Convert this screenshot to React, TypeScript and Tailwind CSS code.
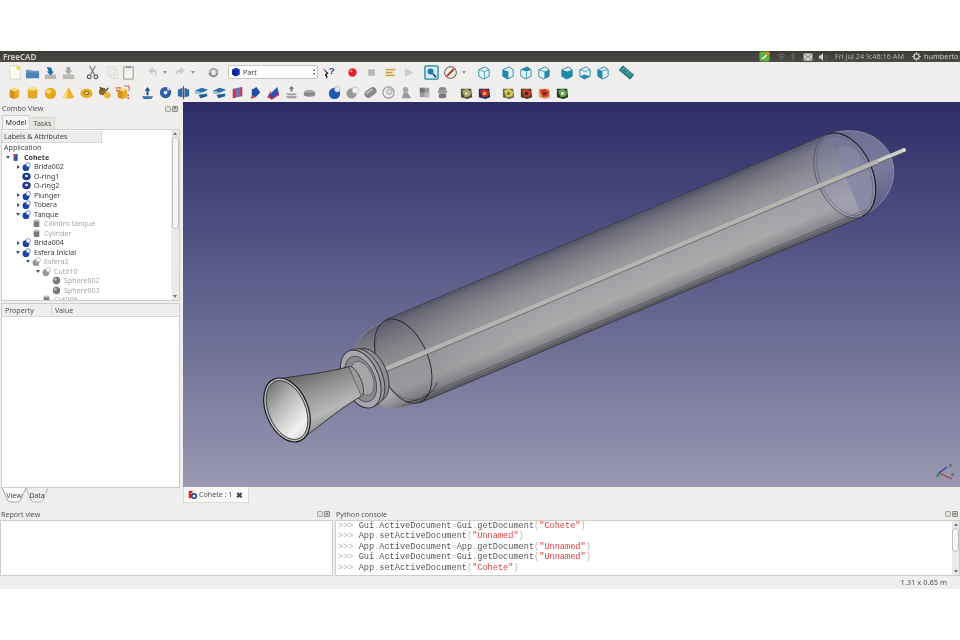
import type { ReactNode } from "react";

type ToolProps = { className?: string; children?: ReactNode };

function Tool({ className = "", children }: ToolProps) {
  return (
    <div className={`flex h-[20px] w-[18px] shrink-0 items-center justify-center ${className}`}>
      <svg viewBox="0 0 16 16" className="h-[15px] w-[15px]">
        {children}
      </svg>
    </div>
  );
}

function Arrow({ className = "" }: { className?: string }) {
  return (
    <div className={`flex h-[20px] w-[8px] shrink-0 items-center justify-center ${className}`}>
      <div className="h-0 w-0 border-x-[2px] border-t-[3px] border-x-transparent border-t-[#9a9a9a]" />
    </div>
  );
}

// part primitives, row 2
const box = (
  <>
    <path d="M3 5l5-2 5 2v8l-5 2-5-2z" fill="#e8ad2c" />
    <path d="M3 5l5 2 5-2-5-2z" fill="#f6dc86" />
    <path d="M8 7v8l-5-2V5z" fill="#d0901c" />
  </>
);
const cyl = (
  <>
    <path d="M3 4v9c0 2 10 2 10 0V4z" fill="#e2a526" />
    <ellipse cx="8" cy="4" rx="5" ry="2" fill="#f7dd85" />
  </>
);
const sphere = (
  <>
    <circle cx="8" cy="9" r="6" fill="#e8a818" />
    <circle cx="6" cy="7" r="2.5" fill="#f8dc80" />
  </>
);
const cone = (
  <>
    <path d="M8 2l6 11c-2 2-10 2-12 0z" fill="#eeb428" />
    <path d="M8 2L2 13c1 1 3 1 4 1z" fill="#f7dc80" />
  </>
);
const torus = (
  <>
    <ellipse cx="8" cy="9" rx="6.5" ry="5" fill="#e8ad2c" />
    <ellipse cx="8" cy="8.5" rx="3" ry="2" fill="#8f6a18" />
    <ellipse cx="8" cy="8.5" rx="2" ry="1" fill="#f4e4b0" />
  </>
);
const blueTool = (
  <>
    <path d="M2 12h12l-2 3H4z" fill="#3b6ea8" />
    <path d="M8 2l3 4H9v5H7V6H5z" fill="#17508c" />
  </>
);
const blueDisc = (
  <>
    <circle cx="8" cy="8" r="6" fill="#2a5ea8" />
    <circle cx="8" cy="8" r="2" fill="#e8edf2" />
    <path d="M10 2l3 3-3 1z" fill="#e8edf2" />
  </>
);
const mirror = (
  <>
    <path d="M2 5l5-2v10l-5-1z" fill="#2f6ba8" />
    <path d="M14 5L9 3v10l5-1z" fill="#2f6ba8" />
    <path d="M8 1v14" stroke="#d02020" strokeWidth="1.2" />
  </>
);
const fillet = (
  <>
    <path d="M1 6l7-3 7 2-6 3z" fill="#2f6ba8" />
    <path d="M1 6l8 2v3l-8-2z" fill="#9ac0d8" />
    <path d="M5 11l9-2v3l-7 2z" fill="#1c5a90" />
  </>
);
const redFace = (
  <>
    <path d="M3 4l10-2v10L3 14z" fill="#7a70b8" />
    <path d="M3 4l3 1v8l-3 1z" fill="#d83040" />
    <path d="M13 2l-2 1v8l2 1z" fill="#d83040" />
  </>
);
const blueRed = (
  <>
    <path d="M4 5l5-3 4 6-5 5-4-2z" fill="#1c4fa8" />
    <path d="M4 11l4 2-5 2z" fill="#d83040" />
  </>
);
const loft = (
  <>
    <path d="M2 12L12 2l2 8-8 5z" fill="#2a50b0" />
    <path d="M2 12l4 3 8-5" fill="none" stroke="#d83040" strokeWidth="1.4" />
    <path d="M2 14l3-7" stroke="#d83040" strokeWidth="1.2" />
  </>
);
const thick = (
  <>
    <path d="M8 1l3 3H9v3H7V4H5z" fill="#777" />
    <path d="M2 9h12l-2 2H4zM2 12h12l-2 2H4z" fill="#999" />
  </>
);
const cross = (
  <>
    <ellipse cx="8" cy="8" rx="6" ry="3" fill="#aaa" />
    <path d="M2 8v3c0 2 12 2 12 0V8" fill="#8a8a8a" />
  </>
);
const ballBlue = (
  <>
    <circle cx="8" cy="9" r="6" fill="#1f55b8" />
    <circle cx="11" cy="4.5" r="3" fill="#e6e9f2" stroke="#888" strokeWidth=".5" />
  </>
);
const ballGray = (shade: string) => (
  <>
    <circle cx="7" cy="9" r="5.5" fill={shade} />
    <circle cx="11" cy="5.5" r="3.5" fill="#f1f1f1" stroke="#999" strokeWidth=".5" />
  </>
);
const pill = (
  <g transform="rotate(-35 8 8)">
    <rect x="1" y="4" width="14" height="8" rx="4" fill="#888" />
    <rect x="3" y="5" width="9" height="2.5" rx="1.2" fill="#b5b5b5" />
  </g>
);
const ringGray = (
  <>
    <circle cx="8" cy="8" r="6" fill="none" stroke="#999" strokeWidth="1.2" />
    <circle cx="9" cy="7" r="3" fill="#ddd" stroke="#777" strokeWidth=".6" />
  </>
);
const person = (
  <>
    <circle cx="7" cy="5" r="3" fill="#aaa" />
    <path d="M3 14l2-6h4l4 6z" fill="#999" />
  </>
);
const blocks = (
  <>
    <rect x="3" y="3" width="10" height="10" fill="#999" />
    <rect x="3" y="3" width="5" height="5" fill="#777" />
    <rect x="8" y="8" width="5" height="5" fill="#b8b8b8" />
  </>
);
const stack = (
  <>
    <ellipse cx="8" cy="4" rx="4" ry="2" fill="#888" />
    <rect x="3" y="5" width="10" height="4" rx="2" fill="#999" />
    <rect x="4" y="9" width="8" height="5" rx="2" fill="#777" />
  </>
);
const mesh = (accent: string, ground: string, spot: string) => (
  <>
    <path d="M2 4h11l1 9-5 2-7-2z" fill={ground} />
    <path d="M3 6l5-2 5 3-1 5-6 1z" fill={accent} />
    <circle cx="8" cy="9" r="1.800" fill={spot} />
  </>
);

// view cubes, row 1
const cube = (face: string, fill: string) => (
  <>
    <path d="M3 5l7-3 4 3v7l-6 3-5-3z" fill="#e4f2f5" stroke="#2b8aa6" strokeWidth="1" />
    <path d={face} fill={fill} />
  </>
);

function Row1() {
  return (
    <div className="flex h-[20px] items-center pl-[5px]">
      <Tool>
        <path d="M3 1h8l3 3v11H3z" fill="#fbfbf2" stroke="#c8c6b8" strokeWidth=".7" />
        <circle cx="12" cy="3" r="2" fill="#f2d23c" />
      </Tool>
      <Tool>
        <path d="M1 5h5l1 1h8v8H1z" fill="#6f9cc4" />
        <path d="M1 8h14v6H1z" fill="#4d82b4" />
      </Tool>
      <Tool>
        <path d="M2 10h12v5H2z" fill="#b9b9b4" />
        <path d="M4 2l5 1 1 4h2l-4 4-4-4h2z" fill="#1f6da8" />
      </Tool>
      <Tool>
        <path d="M2 10h12v5H2z" fill="#b9b9b4" />
        <path d="M6 2h4v4h2l-4 4-4-4h2z" fill="#a5a5a5" />
      </Tool>
      <Tool className="ml-[6px]">
        <path d="M5 1l5 9M11 1L6 10" stroke="#777" strokeWidth="1.2" />
        <circle cx="4.5" cy="12.5" r="2" fill="none" stroke="#555" strokeWidth="1.2" />
        <circle cx="11.5" cy="12.5" r="2" fill="none" stroke="#555" strokeWidth="1.2" />
      </Tool>
      <Tool className="ml-[2px]">
        <path d="M3 2h7v9H3zM6 5h7v9H6z" fill="#f1f1ee" stroke="#d2d2ce" strokeWidth=".8" />
      </Tool>
      <Tool className="-ml-[2px]">
        <path d="M3 2h10v13H3z" fill="#f4f4f1" stroke="#8f8f8a" strokeWidth="1" />
        <rect x="5.5" y="1" width="5" height="2.5" fill="#9a9a96" />
      </Tool>
      <Tool className="ml-[6px]">
        <path d="M4 6l4-4v2.5c4 0 5 3 4.500 6-1-2-2-3-4.500-3V10z" fill="#c9c9c6" />
        <path d="M10 12a3 3 0 0 0 2-2" stroke="#c0c0bc" fill="none" />
      </Tool>
      <Arrow />
      <Tool className="ml-[2px]">
        <path d="M12 6L8 2v2.500c-4 0-5 3-4.500 6 1-2 2-3 4.500-3V10z" fill="#c9c9c6" />
      </Tool>
      <Arrow />
      <Tool className="ml-[7px]">
        <path d="M3 8a5 5 0 0 1 9-3l1-1v4H9l1.500-1.500A3 3 0 0 0 5 8z" fill="#a9a9a6" />
        <path d="M13 8a5 5 0 0 1-9 3l-1 1V8h4l-1.500 1.500A3 3 0 0 0 11 8z" fill="#8f8f8c" />
      </Tool>
      <div className="ml-[6px] flex h-[14px] w-[90px] shrink-0 items-center rounded-[2px] border border-[#c8c6c2] bg-white pl-[2px]">
        <svg viewBox="0 0 16 16" className="h-[10px] w-[10px]">
          <path d="M2 4l6-3 6 3v8l-6 3-6-3z" fill="#1530b8" />
          <path d="M8 7v8l-6-3V4z" fill="#0c1f90" />
        </svg>
        <span className="ml-[2px] flex-1 text-[7.100px] text-[#444]">Part</span>
        <div className="mr-[2px] flex flex-col gap-[2px]">
          <div className="h-0 w-0 border-x-[1.5px] border-b-[2px] border-x-transparent border-b-[#333]" />
          <div className="h-0 w-0 border-x-[1.5px] border-t-[2px] border-x-transparent border-t-[#333]" />
        </div>
      </div>
      <Tool className="ml-[1px]">
        <path d="M2 3l4 6-2 1 2 4 1-1-1-3 2-1z" fill="#111" />
        <text x="8.500" y="10" fontSize="10" fontWeight="700" fill="#1a3f9c" fontFamily="Liberation Sans, sans-serif">?</text>
      </Tool>
      <Tool className="ml-[6px]">
        <circle cx="8" cy="8" r="4.500" fill="#e5202c" />
        <circle cx="6.500" cy="6.500" r="1.500" fill="#f88" />
      </Tool>
      <Tool className="ml-[1px]">
        <rect x="4.500" y="4.500" width="7" height="7" fill="#b9b9b6" />
      </Tool>
      <Tool className="ml-[1px]">
        <path d="M2 2h12v12H2z" fill="#efe9d8" />
        <path d="M3 5h10M3 8h7M3 11h9" stroke="#c49a3c" strokeWidth="1.400" />
      </Tool>
      <Tool>
        <path d="M4 3l9 5-9 5z" fill="#cfcfcc" />
      </Tool>
      <Tool className="ml-[5px]">
        <rect x="1" y="1" width="14" height="14" rx="1" fill="#d4eef2" stroke="#1f88a0" strokeWidth="1.400" />
        <circle cx="7" cy="7" r="3.200" fill="#2a78b0" />
        <path d="M9.500 9.500l3.500 3.500" stroke="#115a7a" strokeWidth="2" />
      </Tool>
      <Tool className="ml-[1px]">
        <circle cx="8" cy="8" r="6.200" fill="#f4f0e8" stroke="#444" strokeWidth="1" />
        <path d="M5 11l6-6" stroke="#3a9a4a" strokeWidth="2.400" />
        <path d="M3.500 12.500l9-9" stroke="#e0282c" strokeWidth="1.300" />
      </Tool>
      <Arrow className="ml-[1px]" />
      <Tool className="ml-[6px]">{cube("", "none")}<path d="M3 5l6 2 5-2M9 7v8" fill="none" stroke="#2b8aa6" strokeWidth=".8" /></Tool>
      <Tool className="ml-[6px]">{cube("M3 5l6 2v8l-6-3z", "#1f8aaa")}</Tool>
      <Tool>{cube("M3 5l7-3 4 3-5 2z", "#1f8aaa")}<path d="M9 7v8" stroke="#2b8aa6" strokeWidth=".8" /></Tool>
      <Tool>{cube("M9 7l5-2v7l-5 3z", "#1f8aaa")}<path d="M3 5l6 2" stroke="#2b8aa6" strokeWidth=".8" /></Tool>
      <Tool className="ml-[5px]">{cube("M9 7l5-2v7l-5 3zM3 5l6 2v8l-6-3z", "#1f8aaa")}</Tool>
      <Tool>{cube("M3 12l5 3 6-3-6-2z", "#1f8aaa")}<path d="M3 5l6 2 5-2" fill="none" stroke="#2b8aa6" strokeWidth=".8" /></Tool>
      <Tool>{cube("M3 5l5 1v9l-5-3z", "#1f8aaa")}<path d="M8 6l6-1" stroke="#2b8aa6" strokeWidth=".8" /></Tool>
      <Tool className="ml-[6px]">
        <g transform="rotate(40 8 8)">
          <rect x="0.500" y="5" width="15" height="6" fill="#2a8c8c" stroke="#0f5a5c" strokeWidth=".7" />
          <path d="M3 5v3M6 5v2M9 5v3M12 5v2" stroke="#b8e0e0" strokeWidth=".7" />
        </g>
      </Tool>
    </div>
  );
}

function Row2() {
  return (
    <div className="flex h-[20px] items-center pl-[5px]">
      <Tool>{box}</Tool>
      <Tool>{cyl}</Tool>
      <Tool>{sphere}</Tool>
      <Tool>{cone}</Tool>
      <Tool>{torus}</Tool>
      <Tool>
        <circle cx="6" cy="7" r="4" fill="#8a6a24" />
        <circle cx="11" cy="11" r="3.500" fill="#e8b840" />
        <path d="M3 2l3 3M12 3l-2 3" stroke="#333" strokeWidth="1.200" />
      </Tool>
      <Tool>
        {box}
        <path d="M2 7V3h5M10 1h5v5M14 10v5" fill="none" stroke="#d81818" strokeWidth="1.200" strokeDasharray="2 1" />
      </Tool>
      <Tool className="ml-[7px]">{blueTool}</Tool>
      <Tool>{blueDisc}</Tool>
      <Tool>{mirror}</Tool>
      <Tool>{fillet}</Tool>
      <Tool>{fillet}</Tool>
      <Tool>{redFace}</Tool>
      <Tool>{blueRed}</Tool>
      <Tool>{loft}</Tool>
      <Tool>{thick}</Tool>
      <Tool>{cross}</Tool>
      <Tool className="ml-[7px]">{ballBlue}</Tool>
      <Tool>{ballGray("#9a9a9a")}</Tool>
      <Tool>{pill}</Tool>
      <Tool>{ringGray}</Tool>
      <Tool>{person}</Tool>
      <Tool>{blocks}</Tool>
      <Tool>{stack}</Tool>
      <Tool className="ml-[6px]">{mesh("#a8a070", "#4a4a38", "#d8d090")}</Tool>
      <Tool>{mesh("#c83028", "#20285c", "#e8b050")}</Tool>
      <Tool className="ml-[6px]">{mesh("#d8c850", "#6a6a50", "#807848")}</Tool>
      <Tool>{mesh("#c84028", "#4a3a28", "#302820")}</Tool>
      <Tool>{mesh("#d03828", "#d8a070", "#5a3020")}</Tool>
      <Tool>{mesh("#6aa050", "#1f3a24", "#d8e0c0")}</Tool>
    </div>
  );
}

function DockButtons() {
  return (
    <div className="flex gap-[1px]">
      <div className="h-[6px] w-[6px] rounded-[1px] border border-[#aaa9a5] bg-[#e0e0dc]" />
      <div className="flex h-[6px] w-[6px] items-center justify-center rounded-[1px] border border-[#8a8a88] bg-[#cfcfcc] text-[5px] leading-none text-[#444]">×</div>
    </div>
  );
}

type TreeIcon = "doc" | "feature" | "ring" | "solid" | "ghost" | "ball";
type TreeRowData = { label: string; depth: number; icon: TreeIcon; open?: boolean; shut?: boolean; faded?: boolean; bold?: boolean };

const rows: TreeRowData[] = [
  { label: "Cohete", depth: 0, icon: "doc", open: true, bold: true },
  { label: "Brida002", depth: 1, icon: "feature", shut: true },
  { label: "O-ring1", depth: 1, icon: "ring" },
  { label: "O-ring2", depth: 1, icon: "ring" },
  { label: "Plunger", depth: 1, icon: "feature", shut: true },
  { label: "Tobera", depth: 1, icon: "feature", shut: true },
  { label: "Tanque", depth: 1, icon: "feature", open: true },
  { label: "Cilindro tanque", depth: 2, icon: "solid", faded: true },
  { label: "Cylinder", depth: 2, icon: "solid", faded: true },
  { label: "Brida004", depth: 1, icon: "feature", shut: true },
  { label: "Esfera Inicial", depth: 1, icon: "feature", open: true },
  { label: "Esfera2", depth: 2, icon: "ghost", open: true, faded: true },
  { label: "Cut010", depth: 3, icon: "ghost", open: true, faded: true },
  { label: "Sphere002", depth: 4, icon: "ball", faded: true },
  { label: "Sphere003", depth: 4, icon: "ball", faded: true },
  { label: "Cut009", depth: 3, icon: "solid", faded: true },
];

function RowIcon({ icon }: { icon: TreeIcon }) {
  return (
    <svg viewBox="0 0 16 16" className="h-[9px] w-[9px]">
      {icon === "doc" && (
        <>
          <path d="M3 2h7v12H3z" fill="#3048a8" />
          <path d="M3 2h4v5H3z" fill="#d83838" />
        </>
      )}
      {icon === "feature" && (
        <>
          <circle cx="7" cy="10" r="6" fill="#1c44a8" />
          <circle cx="11" cy="5" r="4" fill="#fff" stroke="#1c44a8" strokeWidth="1" />
        </>
      )}
      {icon === "ring" && (
        <>
          <ellipse cx="8" cy="8" rx="7.500" ry="6.500" fill="#1f3a88" />
          <ellipse cx="8" cy="7" rx="3" ry="2.200" fill="#d8dcf0" />
        </>
      )}
      {icon === "solid" && (
        <>
          <path d="M3 3v10c0 2 10 2 10 0V3z" fill="#7a7a7a" />
          <ellipse cx="8" cy="3" rx="5" ry="2" fill="#bbb" />
        </>
      )}
      {icon === "ghost" && (
        <>
          <circle cx="7" cy="10" r="6" fill="#999" />
          <circle cx="11" cy="5" r="4" fill="#fff" stroke="#999" strokeWidth="1" />
        </>
      )}
      {icon === "ball" && (
        <>
          <circle cx="8" cy="8" r="6.500" fill="#777" />
          <circle cx="6" cy="6" r="2.500" fill="#bbb" />
        </>
      )}
    </svg>
  );
}

function TreeRow({ row }: { row: TreeRowData }) {
  return (
    <div className="flex h-[9.5px] items-center leading-none" style={{ paddingLeft: 3 + row.depth * 10 }}>
      <div className="flex w-[6px] justify-center">
        {row.open && <div className="h-0 w-0 border-x-[2px] border-t-[3px] border-x-transparent border-t-[#2f5a78]" />}
        {row.shut && <div className="h-0 w-0 border-y-[2px] border-l-[3px] border-y-transparent border-l-[#2f5a78]" />}
      </div>
      <div className="ml-[1px] flex w-[9px] justify-center">
        <RowIcon icon={row.icon} />
      </div>
      <span className={`ml-[3px] whitespace-nowrap text-[7.100px] ${row.faded ? "text-[#a8a8a8]" : "text-[#3c3c3c]"} ${row.bold ? "font-bold" : ""}`}>
        {row.label}
      </span>
    </div>
  );
}

function ScrollBar({ className = "", thumb }: { className?: string; thumb: string }) {
  return (
    <div className={`flex shrink-0 flex-col items-center bg-[#eceae8] ${className}`}>
      <div className="mt-[2px] h-0 w-0 border-x-[2px] border-b-[3px] border-x-transparent border-b-[#777]" />
      <div className={`mt-[2px] w-[7px] rounded-[3px] border border-[#c4c2be] bg-[#f7f6f5] ${thumb}`} />
      <div className="flex-1" />
      <div className="mb-[2px] h-0 w-0 border-x-[2px] border-t-[3px] border-x-transparent border-t-[#777]" />
    </div>
  );
}

function BottomTab({ label, width, active }: { label: string; width: string; active?: boolean }) {
  return (
    <div className={`relative flex h-[15px] items-center justify-center pb-[1px] ${width}`}>
      <svg viewBox="0 0 24 15" preserveAspectRatio="none" className="absolute inset-0 h-full w-full">
        <path
          d="M1 0L6 12Q7 14 9 14H15Q17 14 18 12L23 0"
          fill={active ? "#fff" : "none"}
          stroke={active ? "#8f8e8a" : "#a8a7a3"}
          strokeWidth=".8"
          vectorEffect="non-scaling-stroke"
        />
      </svg>
      <span className="relative text-[7.100px] text-[#444]">{label}</span>
    </div>
  );
}

function LeftDock() {
  return (
    <div className="flex h-full w-[180px] shrink-0 flex-col pl-[1px]">
      <div className="flex h-[13px] shrink-0 items-center justify-between pl-[1px] pr-[2px] text-[7.100px] text-[#555]">
        <span>Combo View</span>
        <DockButtons />
      </div>
      <div className="flex h-[14px] shrink-0 items-end pl-[1px] text-[7.100px]">
        <div className="flex h-[14px] w-[28px] items-center justify-center rounded-t-[2px] border border-b-0 border-[#cfcdc9] bg-[#f6f5f4] text-[#333]">Model</div>
        <div className="ml-[1px] flex h-[12px] w-[24px] items-center justify-center border-t border-r border-[#d6d4d0] bg-[#e6e5e2] text-[#555]">Tasks</div>
      </div>
      <div className="flex h-[172px] shrink-0 border border-[#d0cec9] bg-white">
        <div className="min-w-0 flex-1 overflow-hidden">
          <div className="mt-[1px] flex h-[12px] w-[100px] items-center border-r border-b border-[#d8d6d2] bg-[#eeedeb] pl-[2px] text-[7.100px] text-[#444]">
            Labels &amp; Attributes
          </div>
          <div className="h-[9.500px] pl-[2px] text-[7.100px] leading-[9.500px] text-[#444]">Application</div>
          {rows.map((row) => (
            <TreeRow key={row.label} row={row} />
          ))}
        </div>
        <ScrollBar className="w-[8px]" thumb="h-[92px]" />
      </div>
      <div className="mt-[2px] flex h-[185px] shrink-0 flex-col border border-[#d0cec9] bg-white">
        <div className="flex h-[13px] shrink-0 items-center border-b border-[#d8d6d2] bg-[#efeeec] text-[7.100px] text-[#555]">
          <span className="w-[50px] border-r border-[#d8d6d2] pl-[3px]">Property</span>
          <span className="pl-[3px]">Value</span>
        </div>
      </div>
      <div className="flex h-[15px] shrink-0 items-start">
        <BottomTab label="View" width="w-[26px]" active />
        <BottomTab label="Data" width="w-[24px] -ml-[2px]" />
      </div>
    </div>
  );
}

function Rocket() {
  return (
    <svg viewBox="183 102 777 385" className="h-full w-full">
      <defs>
        <linearGradient id="bodyG" gradientUnits="userSpaceOnUse" x1="0" y1="-45" x2="0" y2="45">
          <stop offset="0" stopColor="#55556e" />
          <stop offset=".1" stopColor="#6f6f7c" />
          <stop offset=".3" stopColor="#8b8b91" />
          <stop offset=".55" stopColor="#a2a2a6" />
          <stop offset=".78" stopColor="#aaaaac" />
          <stop offset=".92" stopColor="#88888c" />
          <stop offset="1" stopColor="#505058" />
        </linearGradient>
        <linearGradient id="fadeG" gradientUnits="userSpaceOnUse" x1="126" y1="0" x2="640" y2="0">
          <stop offset="0" stopColor="#5a5a60" stopOpacity=".25" />
          <stop offset=".3" stopColor="#9a9aa0" stopOpacity="0" />
          <stop offset=".75" stopColor="#8686a8" stopOpacity="0" />
          <stop offset="1" stopColor="#8686a8" stopOpacity=".35" />
        </linearGradient>
        <linearGradient id="coneG" gradientUnits="userSpaceOnUse" x1="0" y1="-33" x2="0" y2="33">
          <stop offset="0" stopColor="#5e5e5e" />
          <stop offset=".35" stopColor="#8e8e8e" />
          <stop offset=".75" stopColor="#b8b8b8" />
          <stop offset="1" stopColor="#8c8c8c" />
        </linearGradient>
        <linearGradient id="mouthG" gradientUnits="userSpaceOnUse" x1="-14" y1="-30" x2="14" y2="30">
          <stop offset="0" stopColor="#6e6e6e" />
          <stop offset=".4" stopColor="#b8b8b8" />
          <stop offset=".8" stopColor="#f2f2f2" />
          <stop offset="1" stopColor="#d8d8d8" />
        </linearGradient>
        <linearGradient id="domeG" gradientUnits="userSpaceOnUse" x1="0" y1="-44" x2="0" y2="44">
          <stop offset="0" stopColor="#6c6c94" />
          <stop offset=".6" stopColor="#7a7a9c" />
          <stop offset="1" stopColor="#5e5e88" />
        </linearGradient>
        <linearGradient id="tailG" gradientUnits="userSpaceOnUse" x1="0" y1="-44" x2="0" y2="44">
          <stop offset="0" stopColor="#75758f" stopOpacity=".6" />
          <stop offset="1" stopColor="#acacc0" stopOpacity=".55" />
        </linearGradient>
      </defs>
      <g transform="translate(287 410) rotate(-22.800)">
        {/* tail dome */}
        <path d="M605-44A50 44 0 0 1 605 44Z" fill="url(#domeG)" stroke="#8c8cac" strokeWidth=".8" />
        <ellipse cx="612" cy="-14" rx="15" ry="15" fill="#8282a4" stroke="#5a5a70" strokeWidth=".6" />
        {/* front dome */}
        <path d="M126-44C92-44 80-32 76 0 80 32 92 44 126 44Z" fill="url(#bodyG)" stroke="#8a8a96" strokeWidth=".8" />
        {/* tank */}
        <rect x="126" y="-45" width="479" height="90" fill="url(#bodyG)" />
        <rect x="126" y="-45" width="479" height="90" fill="url(#fadeG)" />
        <ellipse cx="126" cy="0" rx="25" ry="44.500" fill="url(#bodyG)" />
        <ellipse cx="126" cy="0" rx="25" ry="44.500" fill="#55555c" fillOpacity=".18" />
        <ellipse cx="605" cy="0" rx="28" ry="44.500" fill="url(#tailG)" />
        <path d="M126-45H605M126 45H605" stroke="#3c3c48" strokeWidth=".9" />
        <path d="M126-42.500H600M130 42H612M130 39.500H612" stroke="#55555c" strokeWidth=".6" />
        <ellipse cx="126" cy="0" rx="25" ry="44.500" fill="none" stroke="#2a2a2e" strokeWidth=".9" />
        <path d="M126-40C110-40 102-20 100 0 102 20 110 40 126 40" fill="none" stroke="#55555c" strokeWidth=".5" />
        <path d="M112 38C124 44 142 42 149 33" fill="none" stroke="#2a2a2e" strokeWidth=".7" />
        <ellipse cx="605" cy="0" rx="28" ry="44.500" fill="none" stroke="#4a4a58" strokeWidth=".7" />
        <ellipse cx="605" cy="0" rx="25" ry="42" fill="none" stroke="#5a5a68" strokeWidth=".5" />
        <path d="M605-44.500A28 44.500 0 0 1 605 44.500" fill="none" stroke="#18181c" strokeWidth="1" />
      </g>
      {/* rod */}
      <path d="M383 370L878 161" stroke="#b4b4b0" strokeWidth="5" />
      <path d="M878 161L904 150" stroke="#cfcfca" strokeWidth="4" />
      <path d="M383 373L878 164" stroke="#5a5a60" strokeWidth=".7" />
      <path d="M878 163L904 152.500" stroke="#5a5a60" strokeWidth=".7" />
      <path d="M383 367.400L878 158.400" stroke="#7a7a80" strokeWidth=".4" />
      <circle cx="904" cy="150" r="2" fill="#dcdcd8" />
      <g transform="translate(287 410) rotate(-22.800)">
        {/* flange */}
        <ellipse cx="90" cy="0" rx="17" ry="28" fill="#8d8d93" stroke="#2c2c30" strokeWidth=".8" />
        <ellipse cx="85" cy="0" rx="17" ry="30" fill="#96969c" stroke="#2c2c30" strokeWidth=".8" />
        <ellipse cx="80" cy="0" rx="18" ry="30.500" fill="#a8a8ac" stroke="#2c2c30" strokeWidth=".9" />
        <ellipse cx="80" cy="0" rx="14" ry="24" fill="#8a8a8e" stroke="#3a3a3e" strokeWidth=".7" />
        <ellipse cx="82" cy="0" rx="10" ry="18" fill="#a5a5a8" stroke="#4a4a4e" strokeWidth=".6" />
        {/* nozzle */}
        <path d="M0-33C30-26 50-19 74-16V16C50 19 30 26 0 33Z" fill="url(#coneG)" stroke="#2c2c2c" strokeWidth=".8" />
        <path d="M74-16A6 16 0 0 1 74 16" fill="#9a9a9e" stroke="#2c2c2c" strokeWidth=".7" />
        <ellipse cx="0" cy="0" rx="21" ry="33.500" fill="#bdbdbd" stroke="#161616" strokeWidth="1.200" />
        <ellipse cx="0" cy="0" rx="18.500" ry="31" fill="url(#mouthG)" stroke="#2e2e2e" strokeWidth=".8" />
      </g>
      {/* axis cross */}
      <path d="M939 473L947 467" stroke="#2a3ea0" strokeWidth="1.200" />
      <path d="M939 473L952 479" stroke="#a04040" strokeWidth="1.200" />
      <path d="M939 473L937 477" stroke="#2a8a50" strokeWidth="2" />
      <text x="949" y="467" fontSize="6" fill="#333" fontFamily="Liberation Sans, sans-serif">z</text>
      <text x="951" y="476" fontSize="6" fill="#333" fontFamily="Liberation Sans, sans-serif">x</text>
    </svg>
  );
}

const pyLines: [string, string, string, string, string][] = [
  ["Gui", "ActiveDocument", "Gui", "getDocument", '"Cohete"'],
  ["App", "setActiveDocument", "", "", '"Unnamed"'],
  ["App", "ActiveDocument", "App", "getDocument", '"Unnamed"'],
  ["Gui", "ActiveDocument", "Gui", "getDocument", '"Unnamed"'],
  ["App", "setActiveDocument", "", "", '"Cohete"'],
];

function PyLine({ line }: { line: (typeof pyLines)[number] }) {
  const [obj, attr, rhs, fn, str] = line;
  return (
    <div className="h-[10.400px] whitespace-pre leading-[10.400px] text-[#555]">
      <span className="text-[#b4b4b4]">{">>> "}</span>
      {obj}
      <span className="text-[#b4b4b4]">.</span>
      {attr}
      {rhs && <span className="text-[#b4b4b4]">=</span>}
      {rhs}
      {rhs && <span className="text-[#b4b4b4]">.</span>}
      {fn}
      <span className="text-[#b4b4b4]">(</span>
      <span className="text-[#e23c3c]">{str}</span>
      <span className="text-[#b4b4b4]">)</span>
    </div>
  );
}

export default function App() {
  return (
    <div className="flex h-[640px] w-[960px] flex-col overflow-hidden bg-white blur-[0.3px] [font-family:'Noto_Sans',sans-serif]">
      <div className="h-[51px] shrink-0" />

      <div className="flex h-[11px] shrink-0 items-center justify-between bg-gradient-to-b from-[#3c3b37] to-[#4c4b46] pl-[3px] text-[7.300px] text-[#d8d4cb]">
        <span className="text-[8px] font-semibold">FreeCAD</span>
        <div className="flex items-center text-[#b4b1a9]">
          <svg viewBox="0 0 12 12" className="h-[11px] w-[11px]">
            <rect x="0.500" y="0.500" width="11" height="11" rx="2" fill="#5cb040" />
            <path d="M3 8c2 0 4-2 5-4" stroke="#fff" strokeWidth="1.300" fill="none" />
            <circle cx="9.500" cy="2.500" r="2" fill="#e88a20" />
          </svg>
          <svg viewBox="0 0 12 12" className="ml-[7px] h-[9px] w-[9px]">
            <path d="M1 5c3-3 7-3 10 0M3 7c2-2 4-2 6 0" fill="none" stroke="#8a8880" strokeWidth="1" />
            <circle cx="6" cy="9" r="1" fill="#8a8880" />
          </svg>
          <svg viewBox="0 0 8 12" className="ml-[4px] h-[9px] w-[6px]">
            <path d="M1 3l5 5-2 3V1l2 3-5 5" fill="none" stroke="#7a7870" strokeWidth=".8" />
          </svg>
          <svg viewBox="0 0 12 10" className="ml-[7px] h-[8px] w-[10px]">
            <rect x="0.500" y="0.500" width="11" height="9" fill="#d4d2cc" />
            <path d="M1 1l5 4 5-4M1 9l4-4M11 9L7 5" fill="none" stroke="#4c4b46" strokeWidth=".8" />
          </svg>
          <svg viewBox="0 0 12 10" className="ml-[5px] h-[8px] w-[10px]">
            <path d="M1 3h2l3-3v10L3 7H1z" fill="#d4d2cc" />
            <path d="M8 3c1 1 1 3 0 4M10 2c1.500 2 1.500 4 0 6" fill="none" stroke="#77756e" strokeWidth=".8" />
          </svg>
          <span className="ml-[7px] w-[75px] whitespace-nowrap">Fri Jul 24 9:46:16 AM</span>
          <svg viewBox="0 0 12 12" className="ml-[2px] h-[9px] w-[9px]">
            <circle cx="6" cy="6" r="3.500" fill="none" stroke="#d8d4cb" strokeWidth="1.500" />
            <path d="M6 0v3M6 9v3M0 6h3M9 6h3M2 2l1.500 1.500M10 2L8.500 3.500M2 10l1.500-1.500M10 10L8.500 8.500" stroke="#d8d4cb" strokeWidth="1.100" />
          </svg>
          <span className="ml-[3px] w-[36px] text-[#c8c5bc]">humberto</span>
        </div>
      </div>

      <div className="h-[40px] shrink-0 bg-[#f0efed]">
        <Row1 />
        <Row2 />
      </div>

      <div className="flex h-[487px] shrink-0 flex-col bg-[#f0efed]">
        <div className="flex h-[401px] shrink-0">
          <LeftDock />
          <div className="ml-[3px] flex min-w-0 flex-1 flex-col">
            <div className="h-[385px] shrink-0 bg-gradient-to-b from-[#2e2c68] to-[#9a99b1]">
              <Rocket />
            </div>
            <div className="flex h-[16px] shrink-0">
              <div className="flex h-full w-[66px] items-center border-x border-b border-[#dddbd7] bg-[#f9f9f8] pl-[4px] text-[7.100px] text-[#555]">
                <svg viewBox="0 0 12 12" className="h-[9px] w-[9px]">
                  <path d="M1 1h5v3H4v2h2v2H4v3H1z" fill="#d02828" />
                  <circle cx="8" cy="8" r="3" fill="none" stroke="#1f3a90" strokeWidth="2" />
                </svg>
                <span className="ml-[2px] whitespace-nowrap">Cohete : 1</span>
                <span className="ml-[4px] text-[8px] font-bold leading-none text-[#444]">✖</span>
              </div>
            </div>
          </div>
        </div>

        <div className="mt-[4px] flex h-[69px] shrink-0 gap-[2px]">
          <div className="flex w-[333px] shrink-0 flex-col">
            <div className="flex h-[13px] shrink-0 items-center justify-between pl-[1px] pr-[3px] pt-[1px] text-[7.100px] text-[#555]">
              <span>Report view</span>
              <DockButtons />
            </div>
            <div className="flex-1 border border-[#d0cec9] bg-white" />
          </div>
          <div className="flex min-w-0 flex-1 flex-col">
            <div className="flex h-[13px] shrink-0 items-center justify-between pl-[1px] pr-[2px] pt-[1px] text-[7.100px] text-[#555]">
              <span>Python console</span>
              <DockButtons />
            </div>
            <div className="flex flex-1 overflow-hidden border border-[#d0cec9] bg-white">
              <div className="min-w-0 flex-1 overflow-hidden pl-[2px] [font-family:'Liberation_Mono',monospace] text-[8.600px]">
                {pyLines.map((line, i) => (
                  <PyLine key={i} line={line} />
                ))}
              </div>
              <ScrollBar className="w-[7px]" thumb="h-[24px]" />
            </div>
          </div>
        </div>

        <div className="flex h-[13px] shrink-0 items-center justify-end pr-[13px] text-[7.500px] text-[#555]">
          1.31 x 0.65 m
        </div>
      </div>

      <div className="flex-1" />
    </div>
  );
}
